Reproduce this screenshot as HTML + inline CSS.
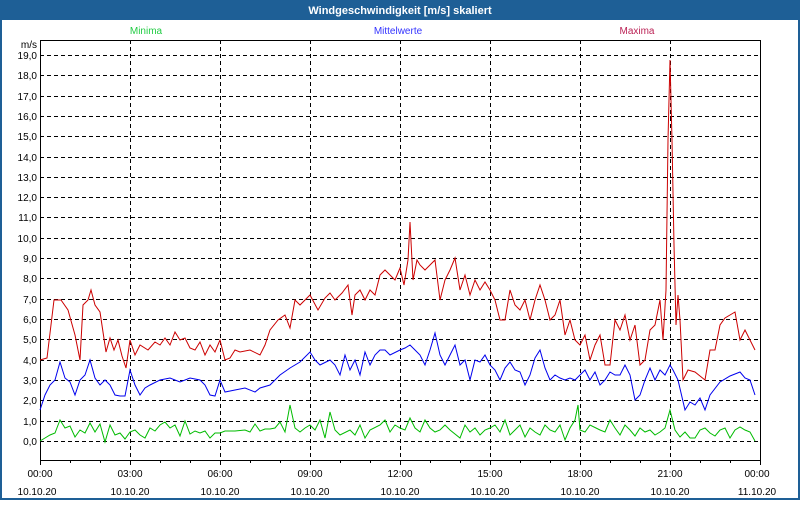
<!DOCTYPE html><html><head><style>body{margin:0;width:800px;height:500px;overflow:hidden;background:#fff}</style></head><body>
<svg width="800" height="500" xmlns="http://www.w3.org/2000/svg" font-family="Liberation Sans, sans-serif" font-size="10">
<rect x="0" y="0" width="800" height="500" fill="#1e5f96"/>
<rect x="2" y="20" width="796" height="478" fill="#fff"/>
<text x="400" y="14" fill="#fff" font-weight="bold" font-size="11" text-anchor="middle">Windgeschwindigkeit [m/s] skaliert</text>
<text x="146" y="34" fill="#22cc44" text-anchor="middle">Minima</text>
<text x="398" y="34" fill="#3333ff" text-anchor="middle">Mittelwerte</text>
<text x="637" y="34" fill="#bb2255" text-anchor="middle">Maxima</text>
<g stroke="#000" stroke-dasharray="4,3" stroke-width="1">
<path d="M40 55.5H760M40 75.5H760M40 96.5H760M40 116.5H760M40 136.5H760M40 157.5H760M40 177.5H760M40 197.5H760M40 217.5H760M40 238.5H760M40 258.5H760M40 278.5H760M40 299.5H760M40 319.5H760M40 339.5H760M40 360.5H760M40 380.5H760M40 400.5H760M40 421.5H760M40 441.5H760"/>
<path d="M130.5 40V460M220.5 40V460M310.5 40V460M400.5 40V460M490.5 40V460M580.5 40V460M670.5 40V460"/>
</g>
<rect x="40.5" y="40.5" width="720" height="420" fill="none" stroke="#000"/>
<g stroke="#000"><path d="M40.5 460v5M70.5 460v3M100.5 460v3M130.5 460v5M160.5 460v3M190.5 460v3M220.5 460v5M250.5 460v3M280.5 460v3M310.5 460v5M340.5 460v3M370.5 460v3M400.5 460v5M430.5 460v3M460.5 460v3M490.5 460v5M520.5 460v3M550.5 460v3M580.5 460v5M610.5 460v3M640.5 460v3M670.5 460v5M700.5 460v3M730.5 460v3M760.5 460v5"/></g>
<g text-anchor="end" fill="#000">
<text x="37" y="48">m/s</text>
<text x="37" y="59">19,0</text><text x="37" y="79">18,0</text><text x="37" y="100">17,0</text><text x="37" y="120">16,0</text><text x="37" y="140">15,0</text><text x="37" y="161">14,0</text><text x="37" y="181">13,0</text><text x="37" y="201">12,0</text><text x="37" y="221">11,0</text><text x="37" y="242">10,0</text><text x="37" y="262">9,0</text><text x="37" y="282">8,0</text><text x="37" y="303">7,0</text><text x="37" y="323">6,0</text><text x="37" y="343">5,0</text><text x="37" y="364">4,0</text><text x="37" y="384">3,0</text><text x="37" y="404">2,0</text><text x="37" y="425">1,0</text><text x="37" y="445">0,0</text>
</g>
<g text-anchor="middle" fill="#000">
<text x="40" y="477">00:00</text><text x="130" y="477">03:00</text><text x="220" y="477">06:00</text><text x="310" y="477">09:00</text><text x="400" y="477">12:00</text><text x="490" y="477">15:00</text><text x="580" y="477">18:00</text><text x="670" y="477">21:00</text><text x="757" y="477">00:00</text>
<text x="37" y="495">10.10.20</text><text x="130" y="495">10.10.20</text><text x="220" y="495">10.10.20</text><text x="310" y="495">10.10.20</text><text x="400" y="495">10.10.20</text><text x="490" y="495">10.10.20</text><text x="580" y="495">10.10.20</text><text x="670" y="495">10.10.20</text><text x="757" y="495">11.10.20</text>
</g>
<g fill="none" stroke-width="1">
<polyline stroke="#cc0000" points="40,360 47,358 54,300 61,300 68,310 75,335 80,360 83,305 88,300 91,290 95,305 100,312 106,352 110,338 114,350 118,340 122,356 126,368 130,340 135,355 140,345 148,350 155,342 160,345 165,338 170,345 175,332 180,340 185,338 190,348 195,350 200,342 205,355 210,345 215,352 220,340 225,360 230,358 235,350 240,352 250,350 260,355 265,345 270,330 278,320 285,315 290,328 295,300 300,305 310,295 318,310 325,298 330,293 335,300 342,293 348,285 352,315 355,295 360,290 365,300 370,290 375,295 380,275 385,270 390,275 395,280 400,268 404,285 408,260 410,222 413,280 417,260 420,265 425,270 430,265 435,260 440,300 445,280 450,270 455,258 460,290 465,275 470,295 475,280 480,290 485,282 490,290 495,300 500,320 505,320 510,290 515,305 520,310 525,300 530,320 535,300 540,285 545,300 550,320 555,315 560,300 565,335 570,320 575,340 580,345 585,335 590,360 595,345 600,335 605,365 610,365 615,320 620,330 625,315 630,340 635,325 640,365 645,360 650,330 655,325 660,300 663,340 666,290 668,140 670,60 672,140 674,245 676,325 678,295 680,320 683,380 688,370 695,372 700,376 705,380 710,350 715,350 720,325 725,318 730,315 735,312 740,340 745,330 750,340 755,350"/>
<polyline stroke="#0000ee" points="40,410 45,395 50,385 55,380 60,362 65,378 70,382 75,395 80,380 85,375 90,360 95,378 100,385 105,380 110,385 115,395 120,396 125,396 130,370 135,385 140,395 145,388 150,385 160,380 170,378 180,382 190,378 200,380 205,385 210,395 215,396 220,380 225,392 235,390 245,388 255,392 260,388 270,385 280,375 290,368 300,362 310,352 315,360 320,365 330,360 335,365 340,375 345,355 350,370 355,360 360,375 365,352 370,365 375,355 380,350 385,350 390,355 400,350 405,348 410,345 415,350 420,355 425,365 430,350 435,333 440,355 445,365 450,355 455,345 460,365 465,360 470,380 475,360 480,362 485,355 490,365 495,370 500,380 505,368 510,362 515,370 520,372 525,385 530,375 535,358 540,350 545,368 550,380 555,375 560,378 565,380 570,378 575,380 580,375 585,370 590,380 595,372 600,385 605,380 610,372 615,375 620,375 625,365 630,375 635,400 640,395 645,380 650,368 655,380 660,370 665,375 670,365 673,370 678,380 685,410 690,402 695,405 700,398 705,410 710,395 720,382 730,376 740,372 745,378 750,380 755,395"/>
<polyline stroke="#00bb00" points="40,441 45,438 50,435 55,433 60,420 65,428 70,426 75,437 80,430 85,433 90,423 95,432 100,424 105,442 110,425 115,435 120,433 125,439 130,432 135,430 140,435 145,438 150,428 155,431 160,425 165,422 170,428 175,425 180,436 185,421 190,434 195,431 200,433 205,431 210,438 215,433 220,433 225,431 235,431 245,430 250,432 255,424 260,431 265,429 270,429 275,428 280,422 285,432 290,405 295,428 300,432 305,428 310,425 315,430 320,420 325,438 330,412 335,430 340,435 350,430 355,435 360,425 365,438 370,430 380,425 385,420 390,432 395,425 400,428 405,430 410,418 415,428 420,432 425,420 430,428 435,432 440,430 445,425 450,430 460,438 465,425 470,432 475,428 480,435 485,430 490,428 495,425 500,432 505,420 510,435 515,430 520,425 525,437 530,428 535,432 540,435 545,425 550,430 555,432 560,425 565,440 570,428 575,420 578,405 580,430 585,432 590,425 600,430 605,432 610,420 615,428 620,435 625,425 630,430 635,436 640,428 645,432 650,430 655,435 660,432 665,428 670,410 675,430 680,437 685,432 690,438 695,438 700,430 705,428 710,433 715,436 720,430 725,428 730,438 735,430 740,427 745,430 750,432 755,441"/>
</g>
</svg>
</body></html>
